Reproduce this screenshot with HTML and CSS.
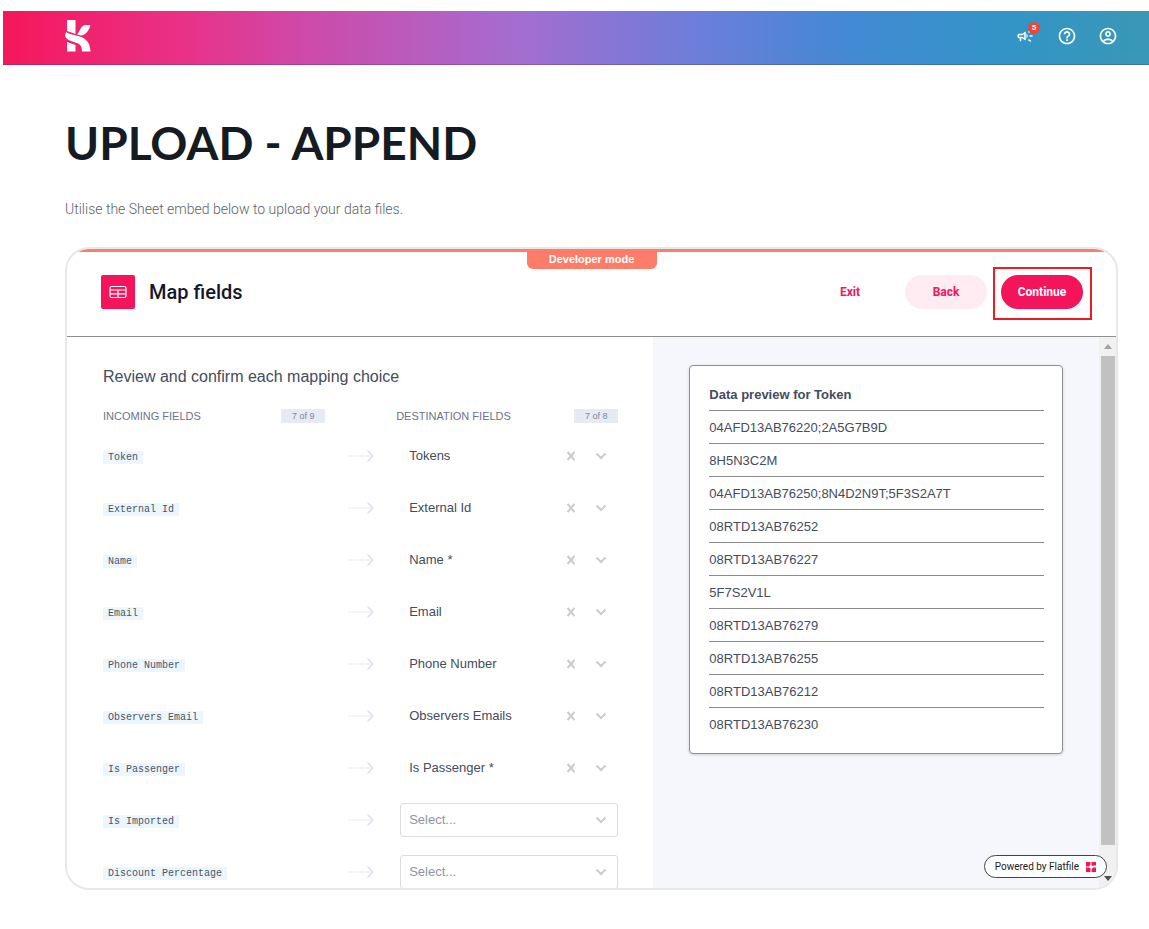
FILE: index.html
```html
<!DOCTYPE html>
<html lang="en">
<head>
	<meta charset="utf-8">
	<title>Upload - Append</title>
	<link rel="stylesheet" href="styles.css">
</head>
<body>

<!-- shared icons -->
<svg class="sprite" aria-hidden="true">
	<symbol id="arrow" viewBox="0 0 26 12"><path d="M0 6h25" stroke="#f0f1f5" stroke-width="1.5"/><path d="M19.500.500l5.500 5.500-5.500 5.500" stroke="#dfe2ec" stroke-width="1.500" fill="none"/></symbol>
	<symbol id="chevron" viewBox="0 0 12 8"><path d="M1.500 1.500L6 6l4.500-4.500" stroke="#ccc" stroke-width="2" fill="none"/></symbol>
	<symbol id="cross" viewBox="0 0 10 10"><path d="M1.500 1l7 8M8.500 1l-7 8" stroke="#ccc" stroke-width="2"/></symbol>
</svg>

<header class="topbar">
	<a class="logo" href="#" aria-label="Home">
		<svg width="26" height="32" viewBox="0 0 26 32" fill="#fff">
			<path d="M2 0h8.500v14C8 12.800 4.500 12.300 2 11z"/>
			<path d="M25.500 5c-1 4-4 9.500-9 10.500-1.500-.3-3.500-.8-4.500-1.300 3-1.700 3-9.200 9-9.200z"/>
			<path d="M1.200 12c3.300 3 13 3.200 18 6.400 4.300 2.800 6 7.300 6.300 13.100H17c0-4-1-6.700-4.500-8.200C8.500 21.500.3 20.500.2 15.500c0-1.500.4-2.700 1-3.500z"/>
			<path d="M2 21.800c3 1.700 6 2 8.500 3.200v6.500H2z"/>
		</svg>
	</a>
	<nav class="tools">
		<button class="tool" aria-label="Announcements, 5 new">
			<svg width="18" height="18" viewBox="0 0 24 24" fill="#fff"><path d="M18 11v2h4v-2h-4zM16 17.600c1 .7 2.200 1.600 3.200 2.400.4-.5.800-1.100 1.200-1.600-1-.7-2.200-1.700-3.200-2.400-.4.500-.8 1.100-1.200 1.600zM20.400 5.600c-.4-.5-.8-1.100-1.200-1.600-1 .7-2.200 1.700-3.200 2.400.4.500.8 1.100 1.200 1.600 1-.7 2.200-1.600 3.200-2.400zM4 9c-1.100 0-2 .9-2 2v2c0 1.100.9 2 2 2h1v4h2v-4h1l5 3V6L8 9H4zm5.030 1.710L11 9.530v4.940l-1.970-1.180-.48-.29H4v-2h4.550l.48-.29zM15.500 12c0-1.330-.58-2.530-1.500-3.350v6.690c.92-.81 1.500-2.010 1.500-3.340z"/></svg>
			<span class="count">5</span>
		</button>
		<button class="tool" aria-label="Help">
			<svg width="20" height="20" viewBox="0 0 24 24" fill="#fff"><path d="M11 18h2v-2h-2v2zm1-16C6.480 2 2 6.480 2 12s4.480 10 10 10 10-4.480 10-10S17.520 2 12 2zm0 18c-4.410 0-8-3.590-8-8s3.590-8 8-8 8 3.590 8 8-3.590 8-8 8zm0-14c-2.210 0-4 1.790-4 4h2c0-1.100.9-2 2-2s2 .9 2 2c0 2-3 1.750-3 5h2c0-2.250 3-2.500 3-5 0-2.210-1.790-4-4-4z"/></svg>
		</button>
		<button class="tool" aria-label="Account">
			<svg width="20" height="20" viewBox="0 0 24 24" fill="#fff"><path fill-rule="evenodd" d="M12 2C6.480 2 2 6.480 2 12s4.480 10 10 10 10-4.480 10-10S17.520 2 12 2zM7.350 18.500C8.660 17.560 10.260 17 12 17s3.340.56 4.650 1.500C15.340 19.440 13.740 20 12 20s-3.340-.56-4.650-1.500zm10.790-1.380C16.450 15.800 14.320 15 12 15s-4.450.8-6.140 2.120C4.700 15.730 4 13.950 4 12c0-4.420 3.580-8 8-8s8 3.580 8 8c0 1.950-.7 3.730-1.860 5.120zM12 6c-1.930 0-3.500 1.570-3.500 3.500S10.070 13 12 13s3.500-1.570 3.500-3.500S13.930 6 12 6zm0 5c-.83 0-1.500-.67-1.500-1.500S11.170 8 12 8s1.500.67 1.500 1.500S12.830 11 12 11z"/></svg>
		</button>
	</nav>
</header>

<main class="page">
	<h1>UPLOAD - APPEND</h1>
	<p class="intro">Utilise the Sheet embed below to upload your data files.</p>

	<section class="embed">
		<div class="devmode">Developer mode</div>
		<div class="embed-head">
			<span class="sheet-icon">
				<svg width="18" height="14" viewBox="0 0 18 14" fill="none" stroke="#fff" stroke-width="1.200"><rect x="1" y="1.500" width="16" height="11" rx="1.500"/><path d="M1 5h16M1 8.800h16M9 5v7.500"/></svg>
			</span>
			<h2>Map fields</h2>
			<button class="btn exit">Exit</button>
			<button class="btn back">Back</button>
			<span class="marked"><button class="btn continue">Continue</button></span>
		</div>

		<div class="embed-body">
			<div class="mapping">
				<h3>Review and confirm each mapping choice</h3>
				<div class="row heads">
					<div class="head">INCOMING FIELDS <span class="tally">7 of 9</span></div>
					<div class="head dest">DESTINATION FIELDS <span class="tally">7 of 8</span></div>
				</div>
				<div class="row">
					<label class="source" for="f1"><code>Token</code></label>
					<svg class="arrow"><use href="#arrow"/></svg>
					<div class="picker">
						<select id="f1"><option>Tokens</option></select>
						<button class="clear" aria-label="Clear"><svg><use href="#cross"/></svg></button>
						<svg class="chevron"><use href="#chevron"/></svg>
					</div>
				</div>
				<div class="row">
					<label class="source" for="f2"><code>External Id</code></label>
					<svg class="arrow"><use href="#arrow"/></svg>
					<div class="picker">
						<select id="f2"><option>External Id</option></select>
						<button class="clear" aria-label="Clear"><svg><use href="#cross"/></svg></button>
						<svg class="chevron"><use href="#chevron"/></svg>
					</div>
				</div>
				<div class="row">
					<label class="source" for="f3"><code>Name</code></label>
					<svg class="arrow"><use href="#arrow"/></svg>
					<div class="picker">
						<select id="f3"><option>Name *</option></select>
						<button class="clear" aria-label="Clear"><svg><use href="#cross"/></svg></button>
						<svg class="chevron"><use href="#chevron"/></svg>
					</div>
				</div>
				<div class="row">
					<label class="source" for="f4"><code>Email</code></label>
					<svg class="arrow"><use href="#arrow"/></svg>
					<div class="picker">
						<select id="f4"><option>Email</option></select>
						<button class="clear" aria-label="Clear"><svg><use href="#cross"/></svg></button>
						<svg class="chevron"><use href="#chevron"/></svg>
					</div>
				</div>
				<div class="row">
					<label class="source" for="f5"><code>Phone Number</code></label>
					<svg class="arrow"><use href="#arrow"/></svg>
					<div class="picker">
						<select id="f5"><option>Phone Number</option></select>
						<button class="clear" aria-label="Clear"><svg><use href="#cross"/></svg></button>
						<svg class="chevron"><use href="#chevron"/></svg>
					</div>
				</div>
				<div class="row">
					<label class="source" for="f6"><code>Observers Email</code></label>
					<svg class="arrow"><use href="#arrow"/></svg>
					<div class="picker">
						<select id="f6"><option>Observers Emails</option></select>
						<button class="clear" aria-label="Clear"><svg><use href="#cross"/></svg></button>
						<svg class="chevron"><use href="#chevron"/></svg>
					</div>
				</div>
				<div class="row">
					<label class="source" for="f7"><code>Is Passenger</code></label>
					<svg class="arrow"><use href="#arrow"/></svg>
					<div class="picker">
						<select id="f7"><option>Is Passenger *</option></select>
						<button class="clear" aria-label="Clear"><svg><use href="#cross"/></svg></button>
						<svg class="chevron"><use href="#chevron"/></svg>
					</div>
				</div>
				<div class="row">
					<label class="source" for="f8"><code>Is Imported</code></label>
					<svg class="arrow"><use href="#arrow"/></svg>
					<div class="picker empty">
						<select id="f8"><option>Select...</option></select>
						<svg class="chevron"><use href="#chevron"/></svg>
					</div>
				</div>
				<div class="row">
					<label class="source" for="f9"><code>Discount Percentage</code></label>
					<svg class="arrow"><use href="#arrow"/></svg>
					<div class="picker empty">
						<select id="f9"><option>Select...</option></select>
						<svg class="chevron"><use href="#chevron"/></svg>
					</div>
				</div>
			</div>

			<div class="preview">
				<div class="card">
					<table>
						<thead><tr><th>Data preview for Token</th></tr></thead>
						<tbody>
							<tr><td>04AFD13AB76220;2A5G7B9D</td></tr>
							<tr><td>8H5N3C2M</td></tr>
							<tr><td>04AFD13AB76250;8N4D2N9T;5F3S2A7T</td></tr>
							<tr><td>08RTD13AB76252</td></tr>
							<tr><td>08RTD13AB76227</td></tr>
							<tr><td>5F7S2V1L</td></tr>
							<tr><td>08RTD13AB76279</td></tr>
							<tr><td>08RTD13AB76255</td></tr>
							<tr><td>08RTD13AB76212</td></tr>
							<tr><td>08RTD13AB76230</td></tr>
						</tbody>
					</table>
				</div>
			</div>

			<div class="scrollbar">
				<svg width="8" height="5" viewBox="0 0 8 5"><path d="M0 5l4-5 4 5z" fill="#a3a3a3"/></svg>
				<div class="thumb"></div>
				<svg width="8" height="5" viewBox="0 0 8 5"><path d="M0 0l4 5 4-5z" fill="#505050"/></svg>
			</div>
		</div>

		<a class="powered" href="#">Powered by Flatfile
			<svg width="10" height="10" viewBox="0 0 10 10" fill="#f3145b"><path d="M0 0h4.500v2.500L3 4.500H0zM5.500 0H10v3.500H7.500L5.500 4zM0 5.500h2.500l2 .5v4H0zM7 5.500h3V10H5.500V7.500z"/></svg>
		</a>
	</section>
</main>

</body>
</html>
```
FILE: styles.css
```css
* {
	box-sizing: border-box;
}
body {
	display: flex;
	flex-direction: column;
	height: 100vh;
	margin: 0;
	padding: 11px 0 39px 3px;
	background: white;
	font-family: "Liberation Sans", Arial, sans-serif;
	font-size: 13px;
	color: #434c60;
}
h1, h2, h3, p {
	margin: 0;
}
button {
	border: 0;
	padding: 0;
	background: none;
	font: inherit;
	cursor: pointer;
}
svg {
	display: block;
	flex: none;
}
.sprite {
	position: absolute;
	width: 0;
	height: 0;
}

/* top bar */
.topbar {
	display: flex;
	flex: none;
	align-items: center;
	justify-content: space-between;
	height: 54px;
	padding: 0 31px 3px 62px;
	border-bottom: 1px solid rgba(80, 60, 130, 0.4);
	background: linear-gradient(90deg, #f5175b 0%, #e83288 16%, #cf49a8 26%, #a46dd0 45%, #6b7ed9 61%, #4289d3 74%, #3295c6 88%, #3a98b6 100%);
}
.tools {
	display: flex;
	gap: 21px;
}
.tool {
	display: flex;
	align-items: center;
	position: relative;
	width: 20px;
	height: 20px;
}
.count {
	position: absolute;
	top: -4px;
	right: -4px;
	width: 12px;
	border-radius: 6px;
	background: #f44336;
	color: white;
	font: bold 8px/12px Roboto, sans-serif;
	text-align: center;
}

/* page */
.page {
	display: flex;
	flex: 1;
	flex-direction: column;
	min-height: 0;
	padding: 52px 31px 0 62px;
}
h1 {
	color: #151b22;
	font: 700 46px/52px Lato, sans-serif;
}
.intro {
	margin: 30px 0 28px;
	color: #5c6167;
	font: 300 14px/20px Roboto, sans-serif;
}

/* embedded importer */
.embed {
	display: flex;
	flex: 1;
	flex-direction: column;
	position: relative;
	min-height: 0;
	overflow: hidden;
	border: 2px solid #e8e8e8;
	border-radius: 24px;
}
.devmode {
	position: absolute;
	top: 0;
	left: 50%;
	width: 130px;
	transform: translateX(-50%);
	border-radius: 0 0 6px 6px;
	background: #ff7d68;
	color: white;
	font-size: 11px;
	font-weight: bold;
	line-height: 20px;
	text-align: center;
}
.embed-head {
	display: flex;
	flex: none;
	align-items: center;
	gap: 14px;
	padding: 23px 33px 27px 34px;
	border-top: 3px solid #ff7d68;
	border-bottom: 1px solid #8f8f8f;
}
.sheet-icon {
	display: flex;
	align-items: center;
	justify-content: center;
	width: 34px;
	height: 34px;
	border-radius: 2px;
	background: #f3145b;
}
h2 {
	flex: 1;
	color: #14162b;
	font: 500 20px/24px Roboto, sans-serif;
}
.btn {
	width: 82px;
	height: 34px;
	border-radius: 17px;
	color: #f3145b;
	font: bold 12px/16px Roboto, sans-serif;
}
.back {
	background: #feecf2;
}
.continue {
	background: #f3145b;
	color: white;
}
.marked {
	position: relative;
}
.marked::after {
	content: "";
	position: absolute;
	inset: -8px -9px -11px -8px;
	border: 2px solid #ed1c24;
	pointer-events: none;
}
.embed-body {
	display: grid;
	flex: 1;
	grid-template-columns: 25fr 19fr 17px;
	min-height: 0;
}

/* field mapping */
.mapping {
	padding: 30px 35px 0 36px;
	overflow: hidden;
}
h3 {
	margin-bottom: 20px;
	font-size: 16px;
	font-weight: normal;
	line-height: 20px;
}
.row {
	display: grid;
	grid-template-columns: 1fr 71px 1fr;
	align-items: center;
	height: 34px;
	margin-bottom: 18px;
}
.heads {
	height: 18px;
	margin-bottom: 14px;
}
.head {
	display: flex;
	align-items: center;
	justify-content: space-between;
	color: #6b7488;
	font-size: 11px;
	white-space: nowrap;
}
.dest {
	grid-column: 3;
}
.tally {
	width: 44px;
	background: #e6eaf2;
	color: #80889a;
	font-size: 9px;
	line-height: 14px;
	text-align: center;
}
.source code {
	display: inline-block;
	padding: 0 5px;
	background: #ebf6ff;
	color: #4b5565;
	font: 10px/13px "Liberation Mono", monospace;
}
.arrow {
	justify-self: center;
	width: 26px;
	height: 12px;
}
.picker {
	display: grid;
	grid-template-columns: 1fr 26px 34px;
	grid-template-rows: 34px;
	align-items: center;
	justify-items: center;
	margin-left: 4px;
}
.picker select {
	grid-area: 1 / 1 / 2 / 4;
	width: 100%;
	height: 34px;
	padding: 0 8px;
	appearance: none;
	border: 1px solid transparent;
	border-radius: 3px;
	background: white;
	color: #434c60;
	font: 13px/16px "Liberation Sans", Arial, sans-serif;
}
.picker.empty select {
	border-color: #ddd;
	color: #8d95a8;
}
.clear {
	grid-area: 1 / 2;
	z-index: 1;
}
.clear svg {
	width: 10px;
	height: 10px;
}
.chevron {
	grid-area: 1 / 3;
	z-index: 1;
	width: 12px;
	height: 8px;
	pointer-events: none;
}

/* data preview */
.preview {
	padding: 28px 36px 0;
	overflow: hidden;
	background: #f6f7fc;
}
.card {
	padding: 12px 18px 12px 19px;
	border: 1px solid #8f8f8f;
	border-radius: 4px;
	background: white;
	box-shadow: 0 1px 3px rgba(0, 0, 0, 0.15);
}
table {
	width: 100%;
	border-spacing: 0;
}
th, td {
	height: 33px;
	padding: 0;
	border-bottom: 1px solid #8a8a8a;
	text-align: left;
}
tbody tr:last-child td {
	border-bottom: 0;
}

.scrollbar {
	display: flex;
	flex-direction: column;
	align-items: center;
	justify-content: space-between;
	gap: 7px;
	padding: 7px 0;
	background: #f1f1f1;
}
.thumb {
	flex: 1;
	width: 14px;
	margin-bottom: 24px;
	background: #c1c1c1;
}
.powered {
	display: flex;
	align-items: center;
	gap: 7px;
	position: absolute;
	right: 9px;
	bottom: 10px;
	height: 23px;
	padding: 0 10px;
	border: 1px solid #444;
	border-radius: 12px;
	background: white;
	color: #222;
	font: 10px/16px Roboto, sans-serif;
	text-decoration: none;
}
```
